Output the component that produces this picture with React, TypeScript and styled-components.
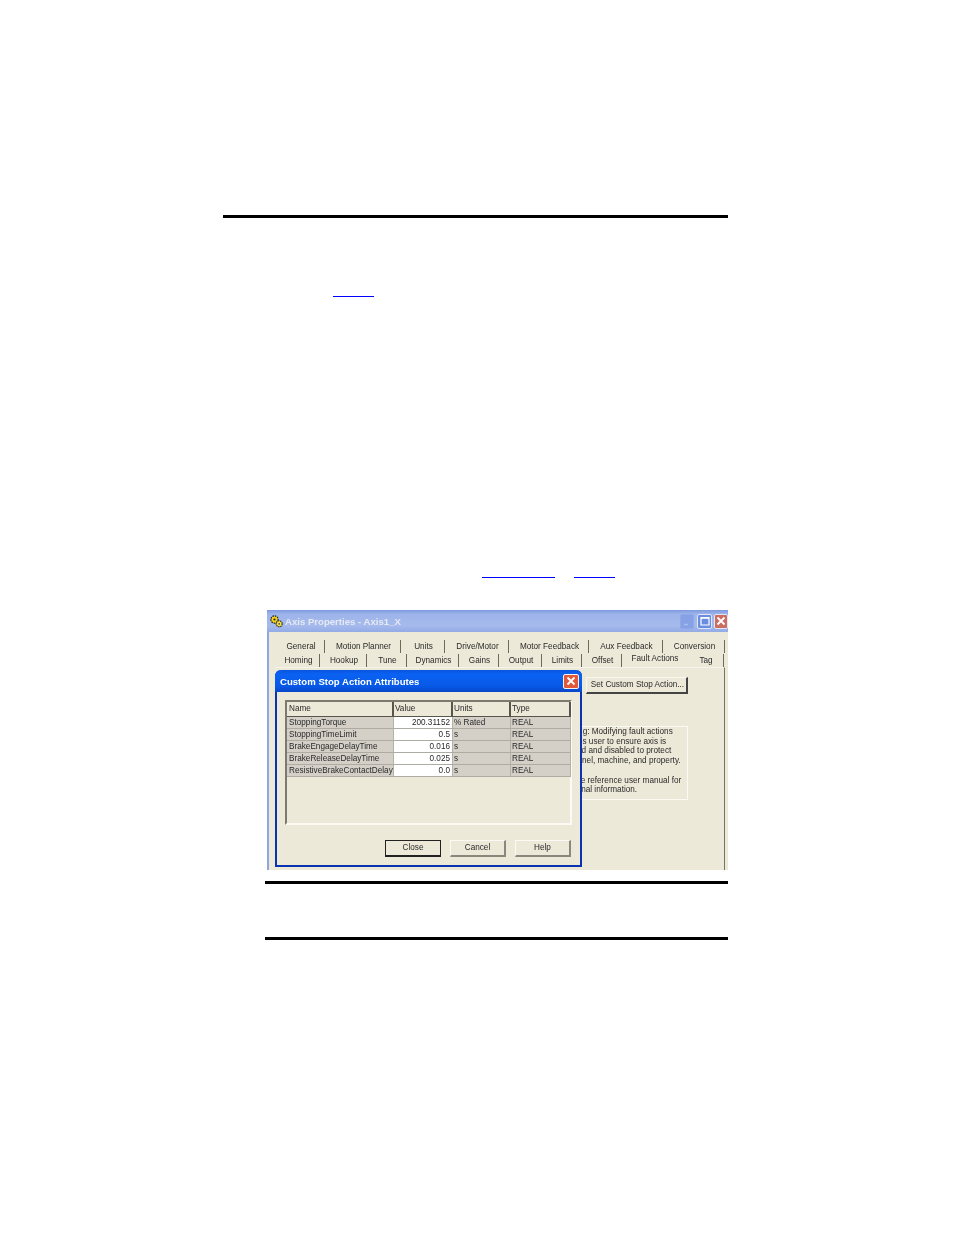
import React from 'react';
import styled, { createGlobalStyle } from 'styled-components';

const GlobalStyle = createGlobalStyle`
  body {
    margin: 0;
    background: #fff;
    font-family: "Liberation Sans", Arial, sans-serif;
  }
`;

const Page = styled.div`
  width: 954px;
  height: 1235px;
  padding-top: 215px;
  box-sizing: border-box;
  overflow: hidden;
`;

const TopRule = styled.div`
  width: 505px;
  height: 3px;
  margin-left: 223px;
  background: #000;
`;

const LinkRow = styled.div<{ $top: number }>`
  display: flex;
  height: 2px;
  margin-top: ${p => p.$top}px;
`;

const LinkLine = styled.span<{ $left: number; $width: number }>`
  display: block;
  width: ${p => p.$width}px;
  height: 1px;
  margin-left: ${p => p.$left}px;
  background: #0000ff;
`;

const Window = styled.div`
  position: relative;
  width: 461px;
  height: 260px;
  margin: 31px 0 0 267px;
  box-sizing: border-box;
  padding-left: 2px;
  background: #ece9d8;
  box-shadow: inset 2px 0 0 #8fa6e3;
  font-size: 8.2px;
  color: #2a2a2a;
  display: flex;
  flex-direction: column;
  filter: blur(0.25px);
`;

const TitleBar = styled.div`
  height: 22px;
  margin-left: -2px;
  flex: none;
  display: flex;
  align-items: center;
  padding: 0 0 0 3px;
  gap: 3px;
  background: linear-gradient(180deg, #7d99e0 0%, #9db4ea 18%, #a6baec 70%, #93abe6 100%);
`;

const TitleText = styled.span`
  flex: 1;
  margin-left: -1px;
  color: #e4e9f4;
  font-size: 9.6px;
  font-weight: 700;
`;

const WinButton = styled.span<{ $tone: string; $w: number; $gap: number; $muted?: boolean }>`
  width: ${p => p.$w}px;
  height: 15px;
  margin-right: ${p => p.$gap}px;
  box-sizing: border-box;
  border-radius: 2px;
  border: 1px solid ${p => (p.$muted ? '#8fa8e6' : '#dfe6f6')};
  background: ${p => p.$tone};
  display: flex;
  align-items: center;
  justify-content: center;
`;

const Tabs = styled.div`
  display: flex;
  flex-direction: column;
  margin: 8px 0 0 7px;
  flex: none;
`;

const TabRow = styled.div<{ $gap?: number }>`
  display: flex;
  height: 13px;
  margin-top: ${p => p.$gap ?? 0}px;
`;

const Tab = styled.div<{ $w: number; $active?: boolean }>`
  width: ${p => p.$w}px;
  box-sizing: border-box;
  padding-left: 2px;
  text-align: center;
  line-height: 13px;
  white-space: nowrap;
  border-right: 1px solid ${p => (p.$active ? 'transparent' : '#6d6a5c')};
  ${p => p.$active && 'transform: translateY(-2px);'}
`;

const TabPanel = styled.div`
  flex: 1;
  margin-left: 6px;
  margin-right: 3px;
  border-right: 1px solid #77756a;
  border-top: 1px solid #f6f4ea;
  padding: 9px 0 0 311px;
  display: flex;
  flex-direction: column;
`;

const SetButton = styled.div`
  width: 102px;
  height: 17px;
  box-sizing: border-box;
  padding-left: 2px;
  border: 1px solid #f8f7f0;
  border-right: 2px solid #444;
  border-bottom: 2px solid #444;
  text-align: center;
  line-height: 14px;
  white-space: nowrap;
`;

const InfoBox = styled.div`
  width: 140px;
  height: 74px;
  margin: 32px 0 0 -38px;
  box-sizing: border-box;
  border: 1px solid #fbfaf4;
  padding: 0 0 0 8px;
  line-height: 9.7px;
  white-space: pre;
`;

const Dialog = styled.div`
  position: absolute;
  left: 8px;
  top: 60px;
  width: 307px;
  height: 197px;
  box-sizing: border-box;
  background: #ece9d8;
  border: 2px solid #0a33b4;
  border-top: 0;
  border-radius: 6px 6px 0 0;
  display: flex;
  flex-direction: column;
`;

const DialogTitle = styled.div`
  height: 22px;
  margin: 0 -2px;
  flex: none;
  display: flex;
  align-items: center;
  justify-content: space-between;
  padding: 0 3px 0 5px;
  border-radius: 6px 6px 0 0;
  background: linear-gradient(180deg, #0a55e0 0%, #0b62f2 20%, #0758e6 75%, #0a46c8 100%);
  color: #fff;
  font-size: 9.6px;
  font-weight: 700;
`;

const CloseBox = styled.span`
  width: 16px;
  height: 15px;
  box-sizing: border-box;
  border: 1px solid #f3f3f3;
  border-radius: 2px;
  background: #e2593a;
  display: flex;
  align-items: center;
  justify-content: center;
`;

const ListFrame = styled.div`
  height: 125px;
  margin: 8px 8px 0 8px;
  flex: none;
  box-sizing: border-box;
  border: 2px solid #7c7a6f;
  border-right: 2px solid #fbfaf4;
  border-bottom: 2px solid #fbfaf4;
`;

const GridRow = styled.div<{ $header?: boolean }>`
  display: grid;
  grid-template-columns: 107px 59px 58px 60px;
  height: ${p => (p.$header ? 15 : 12)}px;
  line-height: ${p => (p.$header ? 13 : 11)}px;
`;

const HeadCell = styled.div`
  box-sizing: border-box;
  padding-left: 2px;
  background: #ece9d8;
  border-right: 2px solid #58564c;
  border-bottom: 1px solid #58564c;
  &:nth-child(n + 2) {
    padding-left: 1px;
  }
`;

const Cell = styled.div<{ $value?: boolean }>`
  box-sizing: border-box;
  padding: ${p => (p.$value ? '0 2px 0 0' : '0 0 0 2px')};
  text-align: ${p => (p.$value ? 'right' : 'left')};
  background: ${p => (p.$value ? '#fff' : '#d4d0c8')};
  border-right: 1px solid #b4b1a6;
  border-bottom: 1px solid #aeaca2;
  white-space: nowrap;
  &:nth-child(n + 3) {
    padding-left: 1px;
  }
`;

const ButtonRow = styled.div`
  display: flex;
  justify-content: flex-end;
  gap: 9px;
  margin: 15px 9px 0 0;
`;

const DialogButton = styled.div<{ $default?: boolean }>`
  width: 56px;
  height: 17px;
  box-sizing: border-box;
  text-align: center;
  line-height: 14px;
  border: 1px solid ${p => (p.$default ? '#222' : '#fbfaf4')};
  border-right: ${p => (p.$default ? '1px solid #222' : '2px solid #8a887c')};
  border-bottom: ${p => (p.$default ? '2px solid #222' : '2px solid #8a887c')};
`;

const BottomRule = styled.div<{ $top: number }>`
  width: 463px;
  height: 3px;
  margin: ${p => p.$top}px 0 0 265px;
  background: #000;
`;

const topTabs: [string, number][] = [
  ['General', 49],
  ['Motion Planner', 76],
  ['Units', 44],
  ['Drive/Motor', 64],
  ['Motor Feedback', 80],
  ['Aux Feedback', 74],
  ['Conversion', 62],
];

const bottomTabs: [string, number][] = [
  ['Homing', 44],
  ['Hookup', 47],
  ['Tune', 40],
  ['Dynamics', 52],
  ['Gains', 40],
  ['Output', 43],
  ['Limits', 40],
  ['Offset', 40],
  ['Fault Actions', 65],
  ['Tag', 37],
];

const rows = [
  ['StoppingTorque', '200.31152', '% Rated', 'REAL'],
  ['StoppingTimeLimit', '0.5', 's', 'REAL'],
  ['BrakeEngageDelayTime', '0.016', 's', 'REAL'],
  ['BrakeReleaseDelayTime', '0.025', 's', 'REAL'],
  ['ResistiveBrakeContactDelay', '0.0', 's', 'REAL'],
];

const infoText = `Warning: Modifying fault actions
requires user to ensure axis is
stopped and disabled to protect
personnel, machine, and property.

See the reference user manual for
additional information.`;

const GearIcon = () => (
  <svg width="13" height="13" viewBox="0 0 13 13">
    <circle cx="4.5" cy="4.5" r="3.6" fill="#f4d21f" stroke="#222" strokeWidth="1.2" strokeDasharray="1.6 0.8" />
    <circle cx="4.5" cy="4.5" r="1.1" fill="#222" />
    <circle cx="9.2" cy="8.8" r="3" fill="#f7e04a" stroke="#222" strokeWidth="1.1" strokeDasharray="1.4 0.7" />
    <circle cx="9.2" cy="8.8" r="0.9" fill="#444" />
  </svg>
);

const CrossIcon = () => (
  <svg width="10" height="10" viewBox="0 0 10 10">
    <path d="M1.5 1.5 L8.5 8.5 M8.5 1.5 L1.5 8.5" stroke="#fff" strokeWidth="1.8" />
  </svg>
);

const App: React.FC = () => {
  return (
    <Page>
      <GlobalStyle />
      <TopRule />
      <LinkRow $top={78}>
        <LinkLine $left={333} $width={41} />
      </LinkRow>
      <LinkRow $top={279}>
        <LinkLine $left={482} $width={73} />
        <LinkLine $left={19} $width={41} />
      </LinkRow>
      <Window>
        <TitleBar>
          <GearIcon />
          <TitleText>Axis Properties - Axis1_X</TitleText>
          <WinButton $tone="#86a1e6" $w={14} $gap={0} $muted>
            <svg width="8" height="10" viewBox="0 0 8 10">
              <path d="M1 8.5 H5" stroke="#a9bdee" strokeWidth="1.5" />
            </svg>
          </WinButton>
          <WinButton $tone="#6a8de2" $w={15} $gap={-1}>
            <svg width="10" height="10" viewBox="0 0 10 10">
              <path d="M1 1.5 H9 V9 H1 Z" fill="none" stroke="#fff" strokeWidth="1.2" />
              <path d="M1 2 H9" stroke="#fff" strokeWidth="1.6" />
            </svg>
          </WinButton>
          <WinButton $tone="#cc6d60" $w={14} $gap={0}>
            <CrossIcon />
          </WinButton>
        </TitleBar>
        <Tabs>
          <TabRow>
            {topTabs.map(([label, w]) => (
              <Tab key={label} $w={w}>{label}</Tab>
            ))}
          </TabRow>
          <TabRow $gap={1}>
            {bottomTabs.map(([label, w]) => (
              <Tab key={label} $w={w} $active={label === 'Fault Actions'}>{label}</Tab>
            ))}
          </TabRow>
        </Tabs>
        <TabPanel>
          <SetButton>Set Custom Stop Action...</SetButton>
          <InfoBox>{infoText}</InfoBox>
        </TabPanel>
        <Dialog>
          <DialogTitle>
            Custom Stop Action Attributes
            <CloseBox><CrossIcon /></CloseBox>
          </DialogTitle>
          <ListFrame>
            <GridRow $header>
              <HeadCell>Name</HeadCell>
              <HeadCell>Value</HeadCell>
              <HeadCell>Units</HeadCell>
              <HeadCell>Type</HeadCell>
            </GridRow>
            {rows.map(([name, value, units, type]) => (
              <GridRow key={name}>
                <Cell>{name}</Cell>
                <Cell $value>{value}</Cell>
                <Cell>{units}</Cell>
                <Cell>{type}</Cell>
              </GridRow>
            ))}
          </ListFrame>
          <ButtonRow>
            <DialogButton $default>Close</DialogButton>
            <DialogButton>Cancel</DialogButton>
            <DialogButton>Help</DialogButton>
          </ButtonRow>
        </Dialog>
      </Window>
      <BottomRule $top={11} />
      <BottomRule $top={53} />
    </Page>
  );
};

export default App;
